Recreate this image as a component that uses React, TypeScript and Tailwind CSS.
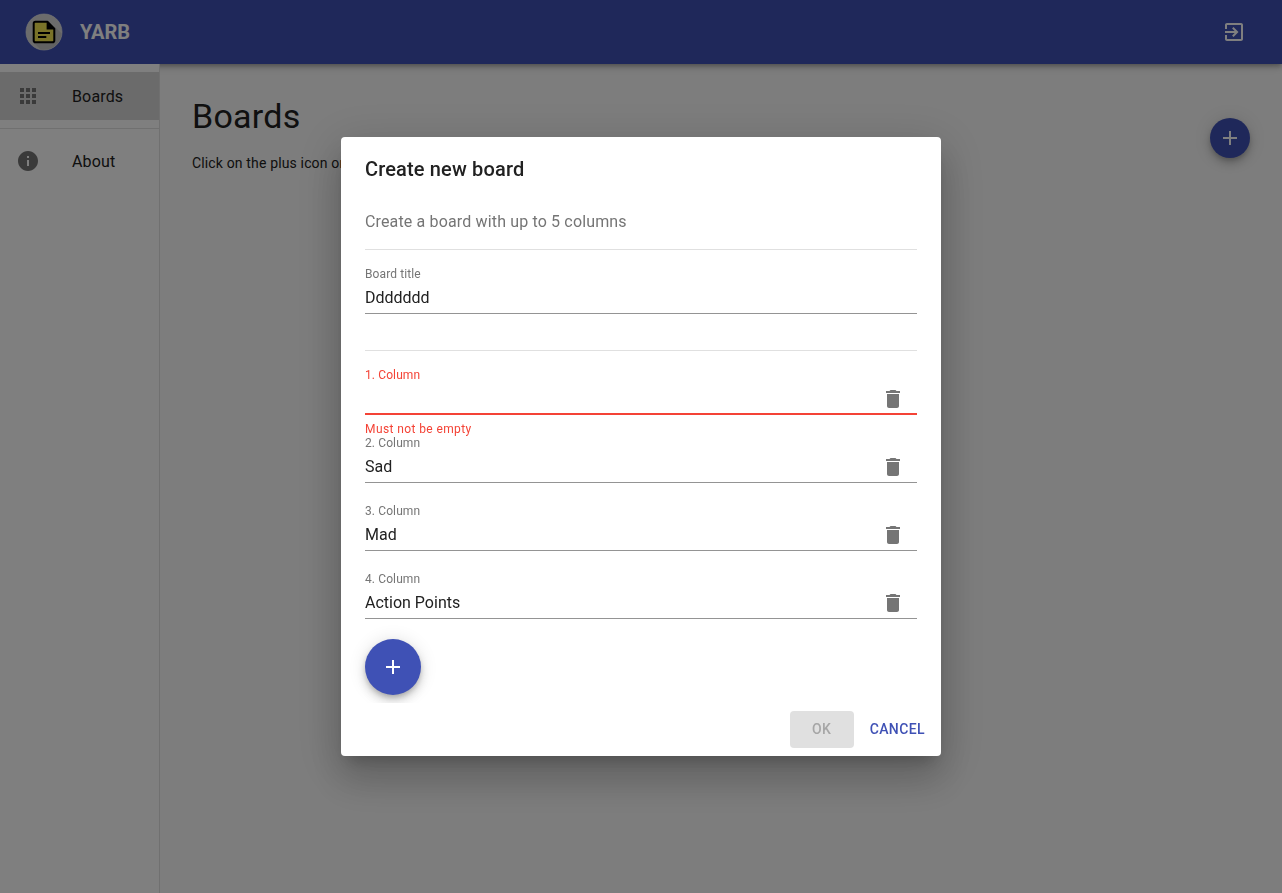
import React from "react";

const PATHS = {
  apps: "M4 8h4V4H4v4zm6 12h4v-4h-4v4zm-6 0h4v-4H4v4zm0-6h4v-4H4v4zm6 0h4v-4h-4v4zm6-10v4h4V4h-4zm-6 4h4V4h-4v4zm6 6h4v-4h-4v4zm0 6h4v-4h-4v4z",
  info: "M12 2C6.48 2 2 6.48 2 12s4.48 10 10 10 10-4.48 10-10S17.52 2 12 2zm1 15h-2v-6h2v6zm0-8h-2V7h2v2z",
  exit: "M10.09 15.59L11.5 17l5-5-5-5-1.41 1.41L12.67 11H3v2h9.67l-2.58 2.59zM19 3H5c-1.11 0-2 .9-2 2v4h2V5h14v14H5v-4H3v4c0 1.1.89 2 2 2h14c1.1 0 2-.9 2-2V5c0-1.1-.9-2-2-2z",
  add: "M19 13h-6v6h-2v-6H5v-2h6V5h2v6h6v2z",
  trash: "M6 19c0 1.1.9 2 2 2h8c1.1 0 2-.9 2-2V7H6v12zM19 4h-3.5l-1-1h-5l-1 1H5v2h14V4z",
};

function Icon({ name, className = "" }: { name: keyof typeof PATHS; className?: string }) {
  return (
    <svg viewBox="0 0 24 24" className={`size-6 shrink-0 fill-current ${className}`} aria-hidden="true">
      <path d={PATHS[name]} />
    </svg>
  );
}

function Logo() {
  return (
    <svg viewBox="0 0 40 40" className="size-10 shrink-0" aria-hidden="true">
      <circle cx="20" cy="20" r="18" fill="#d8d8d8" stroke="#e8e8e8" strokeWidth="0.7" />
      <path d="M30.5 14.5 L37.6 21.5 A17.8 17.8 0 0 1 16.5 37.5 L10 31 Z" fill="#c4c4c4" />
      <path
        d="M11.4 9.8 H23.4 L30.3 16.7 V28.4 Q30.3 30.2 28.5 30.2 H11.5 Q9.7 30.2 9.7 28.4 V11.6 Q9.7 9.8 11.4 9.8 Z"
        fill="#f5e653"
        stroke="#000"
        strokeWidth="2"
        strokeLinejoin="round"
      />
      <path d="M22.6 9.8 L30.3 17.4 H22.6 Z" fill="#000" />
      <path d="M14 21 H26 M14 25 H22.3" stroke="#000" strokeWidth="2" />
    </svg>
  );
}

function NavItem({ icon, label, selected }: { icon: "apps" | "info"; label: string; selected?: boolean }) {
  return (
    <a className={`flex h-12 items-center pl-4 ${selected ? "bg-[#d6d6d6]" : ""}`}>
      <Icon name={icon} className="text-[#757575]" />
      <span className="mt-0.5 ml-8 text-base tracking-[0.00938em]">{label}</span>
    </a>
  );
}

function Field({ label, value, error, removable }: { label: string; value: string; error?: string; removable?: boolean }) {
  return (
    <div className="h-[68px]">
      <div
        className={`flex h-12 flex-col ${error ? "border-b-2 border-[#f44336]" : "border-b border-[#949494]"}`}
      >
        <label className={`h-4 shrink-0 text-xs leading-4 tracking-[0.00938em] ${error ? "text-[#f44336]" : "text-[#757575]"}`}>
          {label}
        </label>
        <div className="flex h-[31px] shrink-0 items-center justify-between pr-3">
          <span className="text-base leading-[19px]">{value}</span>
          {removable && <Icon name="trash" className="text-[#757575]" />}
        </div>
      </div>
      {error && <p className="pt-1 text-xs leading-5 tracking-[0.03333em] text-[#f44336]">{error}</p>}
    </div>
  );
}

function CreateBoardDialog() {
  const columns = [
    { label: "1. Column", value: "", error: "Must not be empty" },
    { label: "2. Column", value: "Sad" },
    { label: "3. Column", value: "Mad" },
    { label: "4. Column", value: "Action Points" },
  ];
  return (
    <div
      role="dialog"
      className="w-[600px] rounded bg-white shadow-[0_11px_15px_-7px_rgba(0,0,0,0.2),0_24px_38px_3px_rgba(0,0,0,0.14),0_9px_46px_8px_rgba(0,0,0,0.12)]"
    >
      <h2 className="px-6 py-4 text-xl leading-8 font-medium tracking-[0.0075em]">Create new board</h2>
      <div className="overflow-hidden px-6 pt-[9px] pb-2">
        <p className="text-base leading-6 tracking-[0.00938em] text-[#757575]">Create a board with up to 5 columns</p>
        <hr className="mt-[15px] mb-4 border-[#e0e0e0]" />
        <Field label="Board title" value="Ddddddd" />
        <hr className="mt-4 mb-4 border-[#e0e0e0]" />
        {columns.map((column) => (
          <Field key={column.label} removable {...column} />
        ))}
        <button className="flex size-14 items-center justify-center rounded-full bg-[#3f51b5] text-white shadow-[0_3px_5px_-1px_rgba(0,0,0,0.2),0_6px_10px_0_rgba(0,0,0,0.14),0_1px_18px_0_rgba(0,0,0,0.12)]">
          <Icon name="add" />
        </button>
      </div>
      <div className="flex justify-end gap-2 p-2 text-sm font-medium tracking-[0.02857em]">
        <button className="h-[37px] w-16 rounded bg-[#e0e0e0] pb-0.5 text-[#a6a6a6]">OK</button>
        <button className="h-[37px] rounded px-2 pb-0.5 text-[#3f51b5]">CANCEL</button>
      </div>
    </div>
  );
}

export default function App() {
  return (
    <div className="flex h-screen flex-col overflow-hidden bg-[#fafafa] font-[Roboto,sans-serif] text-[#212121]">
      <header className="z-10 flex h-16 shrink-0 items-center bg-[#3f51b5] pr-9 pl-6 text-white shadow-[0_2px_4px_-1px_rgba(0,0,0,0.2),0_4px_5px_0_rgba(0,0,0,0.14),0_1px_10px_0_rgba(0,0,0,0.12)]">
        <Logo />
        <span className="ml-4 flex-1 text-xl leading-8 font-bold">YARB</span>
        <Icon name="exit" />
      </header>
      <div className="flex flex-1">
        <nav className="z-20 w-40 border-r border-[#e0e0e0] bg-white pt-2">
          <NavItem icon="apps" label="Boards" selected />
          <hr className="my-2 border-[#e0e0e0]" />
          <NavItem icon="info" label="About" />
        </nav>
        <main className="flex flex-1 items-start justify-between px-8 pt-[31px]">
          <div>
            <h1 className="text-[34px] leading-[42px] tracking-[0.00735em]">Boards</h1>
            <p className="mt-4 text-sm leading-5 tracking-[0.01071em]">Click on the plus icon on</p>
          </div>
          <button className="mt-[23px] flex size-10 items-center justify-center rounded-full bg-[#3f51b5] text-white shadow-[0_3px_5px_-1px_rgba(0,0,0,0.2),0_6px_10px_0_rgba(0,0,0,0.14),0_1px_18px_0_rgba(0,0,0,0.12)]">
            <Icon name="add" />
          </button>
        </main>
      </div>
      <div className="fixed inset-0 z-30 flex items-center justify-center bg-black/50">
        <CreateBoardDialog />
      </div>
    </div>
  );
}
